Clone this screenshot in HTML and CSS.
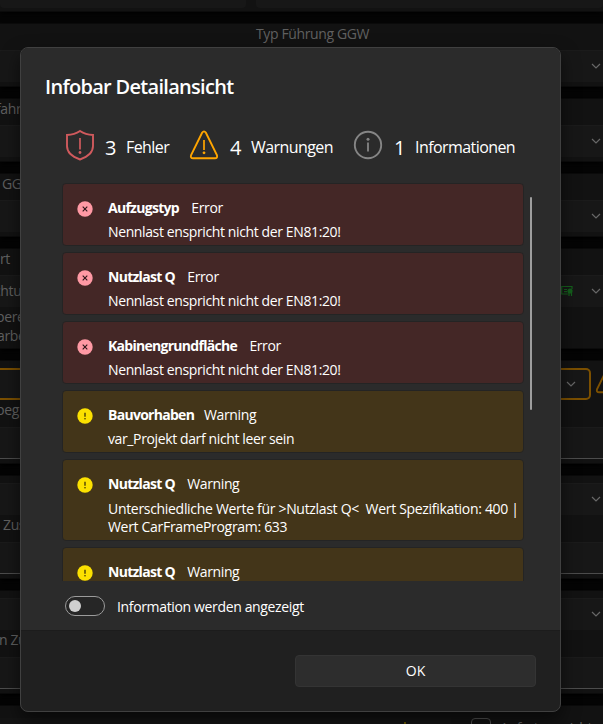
FILE: index.html
```html
<!DOCTYPE html>
<html lang="de">
<head>
<meta charset="utf-8">
<title>Infobar Detailansicht</title>
<link rel="stylesheet" href="styles.css">
</head>
<body>
<svg class="defs" width="0" height="0">
  <symbol id="chev" viewBox="0 0 10 6"><path d="M1 1l4 4 4-4" fill="none" stroke="currentColor" stroke-width="1.2"/></symbol>
  <symbol id="err" viewBox="0 0 16 16"><circle cx="8" cy="8" r="7.7" fill="#ff99a4"/><path d="M5.7 5.7l4.6 4.6M10.3 5.7l-4.6 4.6" stroke="#2a1518" stroke-width="1.1"/></symbol>
  <symbol id="warn" viewBox="0 0 16 16"><circle cx="8" cy="8" r="7.7" fill="#fce100"/><path d="M8 4.8v4" stroke="#2b2408" stroke-width="1.2"/><circle cx="8" cy="10.8" r=".75" fill="#2b2408"/></symbol>
  <symbol id="tri" viewBox="0 0 30 30"><path d="M13.200 2.600Q15 .200 16.800 2.600L27.900 25q1 3.200-2 3.200H4.100q-3 0-2-3.200z" fill="none" stroke="currentColor" stroke-width="1.9"/><path d="M15 10v10" stroke="currentColor" stroke-width="1.7"/><circle cx="15" cy="22.800" r="1.400" fill="currentColor"/></symbol>
</svg>
<div class="page">
  <section class="card first"><div class="half"></div><div class="half right"></div></section>
  <section class="card single"><p class="label center">Typ Führung GGW</p><div class="field"><svg class="chev"><use href="#chev"/></svg></div></section>
  <section class="card single"><p class="label cut">fahr</p><div class="field"><svg class="chev"><use href="#chev"/></svg></div></section>
  <section class="card single"><p class="label gg">GG</p><div class="field"><svg class="chev"><use href="#chev"/></svg></div></section>
  <section class="card note"><p class="label">rt</p><div class="field"><span class="value">chtung</span><svg class="car" viewBox="0 0 12 12"><path d="M1 1.500h10M.7 1v8h6M3 4.500h3M3 6.700h3M11 1v3M8 8v3M10.500 8v3" fill="none" stroke="currentColor" stroke-width="1.200"/><circle cx="9" cy="6" r="2.600" fill="currentColor"/></svg><svg class="chev"><use href="#chev"/></svg></div><p class="hint cut">bere</p><p class="hint arbe">arbe</p></section>
  <section class="card double"><div class="attention"><div class="field orange"><svg class="chev"><use href="#chev"/></svg></div><svg class="side"><use href="#tri"/></svg></div><p class="label low cut">begr</p><div class="field input"></div></section>
  <section class="card double"><div class="field"><svg class="chev"><use href="#chev"/></svg></div><p class="label low z">Zus</p><div class="field input"></div></section>
  <section class="card double"><div class="field"><svg class="chev"><use href="#chev"/></svg></div><p class="label low nz">n Zu</p><div class="field input"></div></section>
  <section class="card last"><div class="lastleft"><i></i></div><span class="box"></span><span class="foot">Anfertrag nicht</span></section>
</div>
<main class="dialog">
  <div class="body">
    <h1>Infobar Detailansicht</h1>
    <div class="summary">
      <svg class="shield" viewBox="0 0 30 32"><path d="M15 2C10.5 5 6 5.8 2 6v11c0 6 4.5 10.5 13 13.500c8.500-3 13-7.500 13-13.500V6C24 5.800 19.500 5 15 2z" fill="none" stroke="currentColor" stroke-width="1.9"/><path d="M15 9v11.500" stroke="currentColor" stroke-width="1.7"/><circle cx="15" cy="23.500" r="1.400" fill="currentColor"/></svg>
      <b>3</b><span>Fehler</span>
      <svg class="tri"><use href="#tri"/></svg>
      <b>4</b><span>Warnungen</span>
      <svg class="info" viewBox="0 0 30 30"><circle cx="15" cy="15" r="13.200" fill="none" stroke="currentColor" stroke-width="1.900"/><path d="M15 12.500v9" stroke="currentColor" stroke-width="1.800"/><circle cx="15" cy="9.300" r="1.500" fill="currentColor"/></svg>
      <b>1</b><span>Informationen</span>
    </div>
    <div class="scroller">
      <div class="list">
        <article class="item error"><svg><use href="#err"/></svg><div><h2>Aufzugstyp <span>Error</span></h2><p>Nennlast enspricht nicht der EN81:20!</p></div></article>
        <article class="item error"><svg><use href="#err"/></svg><div><h2>Nutzlast Q <span>Error</span></h2><p>Nennlast enspricht nicht der EN81:20!</p></div></article>
        <article class="item error"><svg><use href="#err"/></svg><div><h2>Kabinengrundfläche <span>Error</span></h2><p>Nennlast enspricht nicht der EN81:20!</p></div></article>
        <article class="item warning"><svg><use href="#warn"/></svg><div><h2 class="loose">Bauvorhaben <span>Warning</span></h2><p>var_Projekt darf nicht leer sein</p></div></article>
        <article class="item warning tall"><svg><use href="#warn"/></svg><div><h2>Nutzlast Q <span>Warning</span></h2><p>Unterschiedliche Werte für &gt;Nutzlast Q&lt;&nbsp; Wert Spezifikation: 400 |<br>Wert CarFrameProgram: 633</p></div></article>
        <article class="item warning"><svg><use href="#warn"/></svg><div><h2>Nutzlast Q <span>Warning</span></h2></div></article>
      </div>
      <div class="thumb"></div>
    </div>
    <div class="switchrow"><span class="switch"></span><span class="switchtext">Information werden angezeigt</span></div>
  </div>
  <footer><button>OK</button></footer>
</main>
</body>
</html>
```
FILE: styles.css
```css
* { box-sizing: border-box; }
html, body { margin: 0; height: 100%; overflow: hidden; }
body { background: #060606; color: #fff; font: 14px/20px "Open Sans", "Noto Sans", sans-serif; letter-spacing: -0.38px; }
h1, h2, p { margin: 0; font-weight: 400; }
.defs { position: absolute; }
.page { width: 603px; height: 724px; overflow: hidden; color: #606060; }
.card { background: #121212; border-top: 1px solid #0a0a0a; border-bottom: 1px solid #0b0b0b; margin-bottom: 11px; box-shadow: 0 2px 6px #000; }
.first { height: 12px; display: flex; gap: 10px; border-top: 0; }
.half { width: 246px; height: 8px; background: #171717; border-radius: 0 0 4px 4px; }
.right { flex: 1; }
.single { height: 64px; }
.label { height: 26px; line-height: 19px; white-space: nowrap; }
.center { padding-left: 256px; }
.cut { text-indent: -4px; }
.gg { padding-left: 2px; }
.arbe { text-indent: -3px; }
.nz { text-indent: -1px; }
.field { height: 32px; background: #171717; border-top: 1px solid #1b1b1b; display: flex; align-items: center; justify-content: flex-end; padding: 0 2px 2px 0; }
.chev { width: 10px; height: 6px; color: #686868; }
.note { height: 101px; }
.value { margin-right: auto; text-indent: -6px; }
.car { width: 12px; height: 12px; margin-right: 18px; color: #14601c; }
.hint { line-height: 19px; }
.double { height: 104px; padding-top: 7px; }
.low { height: 27px; line-height: 20px; }
.input { border-bottom: 1px solid #4c4c4c; }
.attention { display: flex; gap: 4px; overflow: hidden; }
.orange { width: 591px; border: 2px solid #7c5000; border-left: 0; border-radius: 0 5px 5px 0; padding: 0 13px 0 0; flex: none; }
.side { width: 30px; height: 30px; margin-top: -4px; color: #7c5000; flex: none; }
.z { padding-left: 3px; }
.last { height: 30px; padding-top: 12px; display: flex; }
.lastleft { width: 451px; height: 20px; background: #141414; }
.lastleft i { display: block; width: 2px; height: 10px; margin: 4px 0 0 404px; background: #665500; }
.box { width: 20px; height: 20px; margin-left: 20px; border: 1px solid #505050; border-radius: 4px; }
.foot { margin-left: 9px; white-space: nowrap; }

.dialog { position: absolute; left: 20px; top: 47px; width: 541px; height: 665px; background: #202020; border: 1px solid #404040; border-radius: 8px; overflow: hidden; box-shadow: 0 8px 18px #0008; }
.body { height: 583px; background: #2b2b2b; border-bottom: 1px solid #1c1c1c; padding-top: 25px; }
h1 { font-size: 20px; line-height: 28px; font-weight: 600; padding-left: 24px; letter-spacing: -0.7px; white-space: nowrap; }
.summary { height: 34px; margin: 27px 0 0 44px; display: grid; grid-template-columns: 40px 21px 63px 41px 21px 102px 41px 21px auto; align-items: center; white-space: nowrap; font-size: 16px; letter-spacing: -0.57px; }
.summary b { font-size: 20px; font-weight: 400; padding-top: 5px; }
.summary span { padding-top: 4px; }
.summary .shield { width: 30px; height: 32px; color: #d05a5d; }
.summary .tri { width: 30px; height: 30px; color: #ffa500; margin-top: -1px; }
.summary .info { width: 30px; height: 30px; color: #858585; margin-top: 0; }
.scroller { height: 398px; margin: 21px 0 0 41px; display: flex; gap: 6px; overflow: hidden; }
.list { width: 462px; display: flex; flex-direction: column; gap: 6px; }
.item { height: 63px; flex: none; display: flex; padding-left: 15px; border: 1px solid #242424; border-radius: 4px; }
.item svg { width: 16px; height: 16px; margin: 16.500px 15px 0 -1px; flex: none; }
.item div { padding-top: 14px; white-space: nowrap; }
.item h2 { font-size: 14px; line-height: 20px; height: 24px; font-weight: 700; letter-spacing: -0.72px; }
.item h2 span { font-weight: 400; margin-left: 9.5px; letter-spacing: -0.38px; }
.item .loose span { margin-left: 7px; }
.item p { line-height: 20px; }
.error { background: #442726; }
.warning { background: #433519; }
.tall { height: 82px; }
.item.tall p { line-height: 18px; padding-top: 2px; letter-spacing: -0.31px; }
.thumb { width: 2px; height: 213px; margin-top: 14px; background: #9e9e9e; border-radius: 1px; }
.switchrow { display: flex; align-items: center; gap: 12px; height: 20px; margin: 15px 0 0 44px; }
.switch { width: 40px; height: 20px; border: 1px solid #9b9b9b; border-radius: 10px; background: #262626; }
.switch::before { content: ""; display: block; width: 12px; height: 12px; margin: 3px; border-radius: 50%; background: #cfcfcf; }
.switchtext { padding-top: 2px; letter-spacing: -0.35px; }
footer { display: flex; justify-content: flex-end; padding: 24px 24px 0 0; }
button { width: 241px; height: 32px; border: 1px solid #343434; border-radius: 4px; background: #2d2d2d; color: #fff; font: inherit; padding: 0; }
```
